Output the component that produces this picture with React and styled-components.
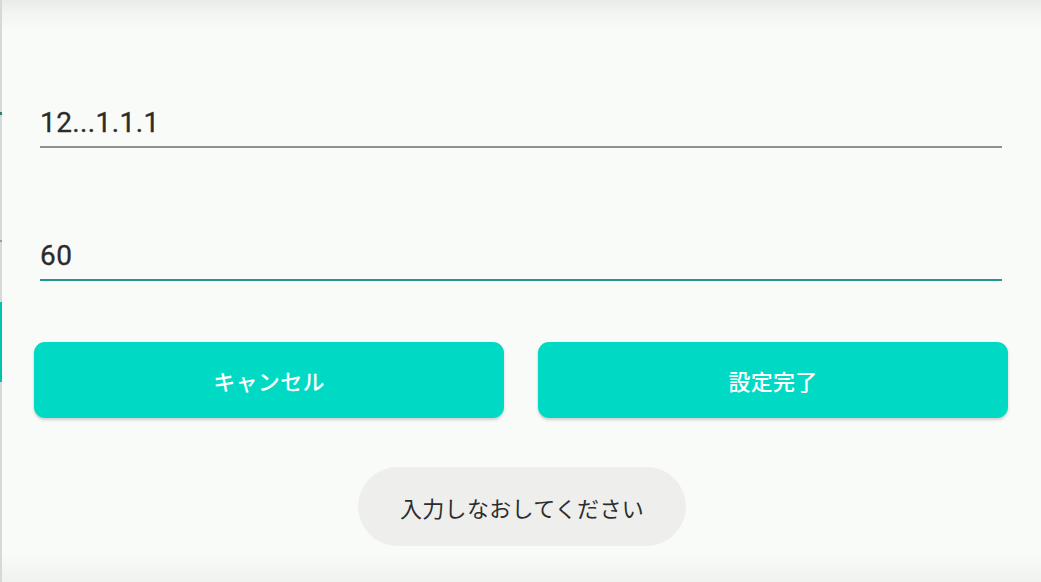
import React from 'react'
import styled, { createGlobalStyle } from 'styled-components'

const GlobalStyle = createGlobalStyle`
  html, body {
    margin: 0;
    padding: 0;
    background: #f9fbf9;
  }
  body {
    font-family: Roboto, "Noto Sans CJK JP", sans-serif;
  }
`

const Screen = styled.div`
  position: relative;
  width: 1041px;
  height: 582px;
  overflow: hidden;
  background: linear-gradient(
    to bottom,
    #e9ebe8 0px,
    #f3f5f2 14px,
    #f9fbf9 32px,
    #f9fbf9 555px,
    #f0f2ef 582px
  );
  display: flex;
`

const EdgeStrip = styled.div`
  width: 2px;
  flex: none;
  background: #d6d9d7;
  display: flex;
  flex-direction: column;
`

const EdgeMark = styled.div`
  height: ${p => p.$h}px;
  margin-top: ${p => p.$top}px;
  background: ${p => p.$color};
`

const Content = styled.div`
  flex: 1;
  display: flex;
  flex-direction: column;
  padding: 0 32px 0 32px;
`

const Field = styled.div`
  margin: ${p => p.$top}px 7px 0 6px;
  border-bottom: 2px solid ${p => (p.$active ? '#23968b' : '#8f918f')};
  padding-bottom: ${p => p.$pad}px;
  font-size: 28px;
  color: #2b2b2b;
  line-height: 28px;
  letter-spacing: 0.4px;
  -webkit-text-stroke: 0.3px #2b2b2b;
`

const ButtonRow = styled.div`
  margin-top: 61px;
  display: grid;
  grid-template-columns: 470px 470px;
  column-gap: 34px;
`

const Button = styled.button`
  height: 76px;
  border: none;
  border-radius: 11px;
  background: #00dac5;
  color: #ffffff;
  font-family: Roboto, "Noto Sans CJK JP", sans-serif;
  font-size: 22px;
  font-weight: 500;
  letter-spacing: 0.3px;
  box-shadow: 0 2px 3px rgba(0, 0, 0, 0.18);
  cursor: pointer;
`

const ToastRow = styled.div`
  margin-top: 49px;
  display: flex;
  justify-content: center;
  padding-left: 1px;
`

const Toast = styled.div`
  width: 328px;
  height: 79px;
  border-radius: 40px;
  background: #eeefed;
  display: flex;
  align-items: center;
  justify-content: center;
  font-family: "Noto Sans CJK JP", sans-serif;
  font-size: 22px;
  color: #2d2d2d;
  letter-spacing: 0.3px;
`

export default function App() {
  return (
    <>
      <GlobalStyle />
      <Screen>
        <EdgeStrip>
          <EdgeMark $top={112} $h={3} $color='#2a7f78' />
          <EdgeMark $top={125} $h={2} $color='#9a9a9a' />
          <EdgeMark $top={60} $h={80} $color='#00c4b0' />
        </EdgeStrip>
        <Content>
          <Field $top={109} $pad={9}>
            12...1.1.1
          </Field>
          <Field $top={94} $active $pad={9}>
            60
          </Field>
          <ButtonRow>
            <Button>キャンセル</Button>
            <Button>設定完了</Button>
          </ButtonRow>
          <ToastRow>
            <Toast>入力しなおしてください</Toast>
          </ToastRow>
        </Content>
      </Screen>
    </>
  )
}
